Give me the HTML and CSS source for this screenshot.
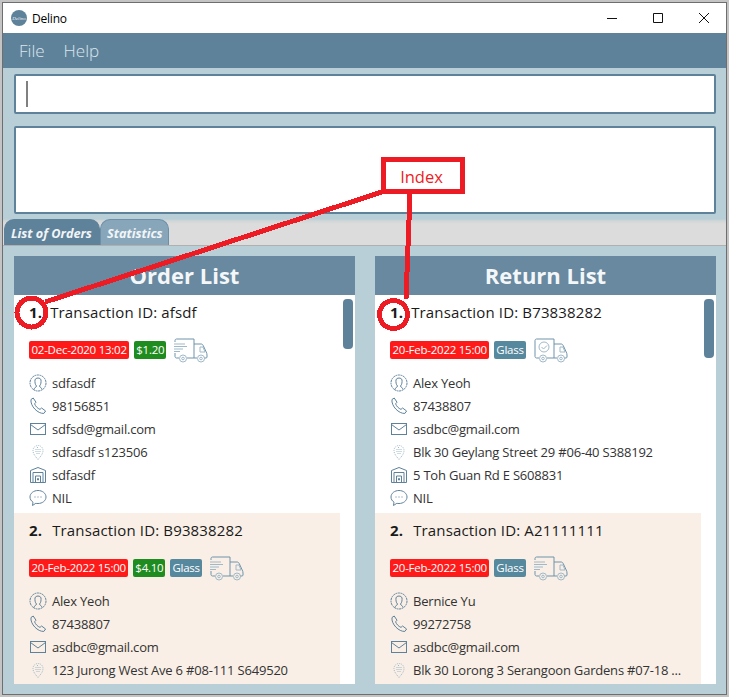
FILE: index.html
```html
<!DOCTYPE html>
<html lang="en">
<head>
    <meta charset="UTF-8">
    <meta name="viewport" content="width=device-width, initial-scale=1.0">
    <title>Delino</title>
    <link rel="stylesheet" href="styles.css">
</head>
<body>
    <!-- icons used by every card -->
    <svg class="icon-defs" aria-hidden="true">
        <symbol id="i-person" viewBox="0 0 18 18">
            <circle cx="9" cy="9" r="8" stroke-dasharray="2 0.6"/>
            <path d="M5 15.500c0-2 2.500-2 2.500-3.500C6 10.500 5.800 8 6 6c.4-2.600 5.600-2.600 6 0 .2 2 0 4.500-1.500 6 0 1.500 2.500 1.500 2.500 3.500"/>
        </symbol>
        <symbol id="i-phone" viewBox="0 0 18 18">
            <path d="M2 2.500 4.200 1 7 5.200 5.600 6.800c.8 2.400 3 4.600 5.400 5.600l1.600-1.400 4 3-1.700 2.400C9 17 1 9 2 2.500z"/>
        </symbol>
        <symbol id="i-mail" viewBox="0 0 18 18">
            <rect x="1.500" y="3.500" width="15" height="11"/>
            <path d="M1.500 4.500 9 10l7.500-5.500"/>
        </symbol>
        <symbol id="i-pin" viewBox="0 0 18 18">
            <path class="faint" d="M9 16.500C6.500 13.500 4 11 4 7.500a5 5 0 0 1 10 0c0 3.500-2.500 6-5 9z" stroke-dasharray="1 1"/>
            <path class="faint" d="M6.500 6.500h5M6.500 8.500h5M7.500 10.500h3M8 4.500h2" stroke-dasharray="1 1"/>
        </symbol>
        <symbol id="i-building" viewBox="0 0 18 18">
            <path d="M1.500 16.500V4.500L9 1.500l7.500 3v12z"/>
            <path d="M4 16.500V6.500h10v10M6.500 16.500V10h5v6.500"/>
            <path d="M8.500 12.500h1v1.500h-1z"/>
        </symbol>
        <symbol id="i-chat" viewBox="0 0 18 18">
            <path d="M9 1.500c4.400 0 8 2.800 8 6.500s-3.600 6.500-8 6.500c-.8 0-1.500 0-2.200-.2L3.500 16.500l.5-3.300C2.200 12 1 10.200 1 8c0-3.700 3.600-6.500 8-6.500z"/>
            <path d="M5.500 8h1M8.500 8h1M11.500 8h1"/>
        </symbol>
        <symbol id="i-truck" viewBox="0 0 35 25">
            <path d="M2 4V2.500C2 1.700 2.700 1 3.500 1H21v19H14M6 20H3.500C2.700 20 2 19.300 2 18.500V15"/>
            <path d="M21 6h7c1 0 1.800.6 2.200 1.500l3 6.500c.5 1 .8 1.800.8 3v2c0 .6-.4 1-1 1h-2M24 20h-3"/>
            <path class="faint" d="M1 6h11M1 8.500h13M1 11h9M1 13.500h6"/>
            <path class="faint" d="M27 9h3l2 5h-5z"/>
            <circle class="faint" cx="10" cy="20.500" r="3.500"/>
            <circle class="faint" cx="10" cy="20.500" r="1.300"/>
            <circle class="faint" cx="28" cy="20.500" r="3.500"/>
            <circle class="faint" cx="28" cy="20.500" r="1.300"/>
        </symbol>
        <symbol id="i-truck-done" viewBox="0 0 35 25">
            <path d="M6 20H3.500C2.700 20 2 19.300 2 18.500V2.500C2 1.700 2.700 1 3.500 1H21v19H14"/>
            <path d="M21 6h7c1 0 1.800.6 2.200 1.500l3 6.500c.5 1 .8 1.800.8 3v2c0 .6-.4 1-1 1h-2M24 20h-3"/>
            <circle class="faint" cx="11" cy="9" r="5"/>
            <path class="faint" d="M8.500 9l2 2 3.500-3.500"/>
            <path class="faint" d="M27 9h3l2 5h-5z"/>
            <circle class="faint" cx="10" cy="20.500" r="3.500"/>
            <circle class="faint" cx="10" cy="20.500" r="1.300"/>
            <circle class="faint" cx="28" cy="20.500" r="3.500"/>
            <circle class="faint" cx="28" cy="20.500" r="1.300"/>
        </symbol>
    </svg>

    <div class="window">
        <div class="titlebar">
            <div class="logo"><span>Delino</span></div>
            <div class="app-name">Delino</div>
            <div class="controls">
                <svg class="control" viewBox="0 0 46 30"><path d="M18 15.500h10"/></svg>
                <svg class="control" viewBox="0 0 46 30"><path d="M18.500 10.500h9v9h-9z"/></svg>
                <svg class="control" viewBox="0 0 46 30"><path d="M18 10l10 10M28 10 18 20"/></svg>
            </div>
        </div>

        <div class="menubar">
            <span class="menu-item">File</span>
            <span class="menu-item">Help</span>
        </div>

        <div class="top-area">
            <div class="command-box"><div class="caret"></div></div>
            <div class="result-box"></div>
        </div>

        <div class="tab-strip">
            <div class="tab tab-active">List of Orders</div>
            <div class="tab tab-stats">Statistics</div>
        </div>

        <div class="lists">
            <section class="panel">
                <h2 class="panel-title">Order List</h2>
                <div class="list">
                    <div class="scroll-thumb thumb-order"></div>
                    <article class="card">
                        <div class="card-title title-first"><b>1.</b><span>Transaction ID: afsdf</span></div>
                        <div class="tags">
                            <span class="tag tag-red">02-Dec-2020 13:02</span>
                            <span class="tag tag-green">$1.20</span>
                            <svg class="truck"><use href="#i-truck"/></svg>
                        </div>
                        <div class="field"><svg class="icon"><use href="#i-person"/></svg>sdfasdf</div>
                        <div class="field"><svg class="icon"><use href="#i-phone"/></svg>98156851</div>
                        <div class="field"><svg class="icon"><use href="#i-mail"/></svg>sdfsd@gmail.com</div>
                        <div class="field"><svg class="icon"><use href="#i-pin"/></svg>sdfasdf s123506</div>
                        <div class="field"><svg class="icon"><use href="#i-building"/></svg>sdfasdf</div>
                        <div class="field"><svg class="icon"><use href="#i-chat"/></svg>NIL</div>
                    </article>
                    <article class="card card-alt">
                        <div class="card-title"><b>2.</b><span>Transaction ID: B93838282</span></div>
                        <div class="tags">
                            <span class="tag tag-red">20-Feb-2022 15:00</span>
                            <span class="tag tag-green">$4.10</span>
                            <span class="tag tag-glass">Glass</span>
                            <svg class="truck"><use href="#i-truck"/></svg>
                        </div>
                        <div class="field"><svg class="icon"><use href="#i-person"/></svg>Alex Yeoh</div>
                        <div class="field"><svg class="icon"><use href="#i-phone"/></svg>87438807</div>
                        <div class="field"><svg class="icon"><use href="#i-mail"/></svg>asdbc@gmail.com</div>
                        <div class="field"><svg class="icon"><use href="#i-pin"/></svg>123 Jurong West Ave 6 #08-111 S649520</div>
                    </article>
                </div>
            </section>

            <section class="panel">
                <h2 class="panel-title">Return List</h2>
                <div class="list">
                    <div class="scroll-thumb thumb-return"></div>
                    <article class="card">
                        <div class="card-title title-first"><b>1.</b><span>Transaction ID: B73838282</span></div>
                        <div class="tags">
                            <span class="tag tag-red">20-Feb-2022 15:00</span>
                            <span class="tag tag-glass">Glass</span>
                            <svg class="truck"><use href="#i-truck-done"/></svg>
                        </div>
                        <div class="field"><svg class="icon"><use href="#i-person"/></svg>Alex Yeoh</div>
                        <div class="field"><svg class="icon"><use href="#i-phone"/></svg>87438807</div>
                        <div class="field"><svg class="icon"><use href="#i-mail"/></svg>asdbc@gmail.com</div>
                        <div class="field"><svg class="icon"><use href="#i-pin"/></svg>Blk 30 Geylang Street 29 #06-40 S388192</div>
                        <div class="field"><svg class="icon"><use href="#i-building"/></svg>5 Toh Guan Rd E S608831</div>
                        <div class="field"><svg class="icon"><use href="#i-chat"/></svg>NIL</div>
                    </article>
                    <article class="card card-alt">
                        <div class="card-title"><b>2.</b><span>Transaction ID: A21111111</span></div>
                        <div class="tags">
                            <span class="tag tag-red">20-Feb-2022 15:00</span>
                            <span class="tag tag-glass">Glass</span>
                            <svg class="truck"><use href="#i-truck"/></svg>
                        </div>
                        <div class="field"><svg class="icon"><use href="#i-person"/></svg>Bernice Yu</div>
                        <div class="field"><svg class="icon"><use href="#i-phone"/></svg>99272758</div>
                        <div class="field"><svg class="icon"><use href="#i-mail"/></svg>asdbc@gmail.com</div>
                        <div class="field"><svg class="icon"><use href="#i-pin"/></svg>Blk 30 Lorong 3 Serangoon Gardens #07-18 ...</div>
                    </article>
                </div>
            </section>
        </div>

        <!-- red annotation drawn on top of the screenshot -->
        <svg class="callout-lines" viewBox="0 0 729 697">
            <path d="M385 191 45 302"/>
            <path d="M410 194 406 299"/>
            <circle cx="31.500" cy="312.500" r="14.500"/>
            <circle cx="393.500" cy="314.500" r="14"/>
        </svg>
        <div class="callout-box">Index</div>
    </div>
</body>
</html>
```

FILE: styles.css
```css
* {
    box-sizing: border-box;
}

body {
    margin: 0;
    padding: 2px;
    font-family: "Open Sans", "Noto Sans", sans-serif;
    background-color: #c4c4c4;
}

.icon-defs {
    position: absolute;
    width: 0;
    height: 0;
}

symbol {
    overflow: visible;
}

.window {
    position: relative;
    display: flex;
    flex-direction: column;
    width: 725px;
    height: 693px;
    border: 1px solid #6e6e6e;
    overflow: hidden;
    background-color: #b9cfd7;
}

/* Title bar */
.titlebar {
    display: flex;
    align-items: center;
    height: 30px;
    padding-left: 8px;
    background-color: white;
}

.logo {
    display: flex;
    justify-content: center;
    align-items: center;
    width: 16px;
    height: 16px;
    border-radius: 50%;
    background-color: #5f829b;
    overflow: hidden;
}

.logo span {
    font-family: "Liberation Serif", serif;
    font-style: italic;
    font-size: 5px;
    color: #e8eef2;
}

.app-name {
    margin-left: 5px;
    font-size: 12px;
    letter-spacing: -0.2px;
    color: black;
}

.controls {
    display: flex;
    margin-left: auto;
    margin-right: -1px;
}

.control {
    width: 46px;
    height: 30px;
    fill: none;
    stroke: #111;
    stroke-width: 1;
}

/* Menu */
.menubar {
    display: flex;
    align-items: center;
    gap: 19px;
    height: 35px;
    padding-left: 16px;
    background-color: #5f829b;
}

.menu-item {
    font-size: 17px;
    font-weight: 300;
    color: #dde6ec;
}

/* Command box and result box */
.top-area {
    display: flex;
    flex-direction: column;
    gap: 12px;
    padding: 6px 10px 0 11px;
}

.command-box,
.result-box {
    background-color: white;
    border: 2px solid #5f829b;
    border-radius: 2px;
}

.command-box {
    height: 40px;
    padding: 5px 0 0 10px;
}

.caret {
    width: 2px;
    height: 26px;
    background-color: #808080;
}

.result-box {
    height: 88px;
}

/* Tabs */
.tab-strip {
    display: flex;
    align-items: flex-end;
    height: 32px;
    padding-left: 1px;
    background: linear-gradient(#b9cfd7 5px, #d2d6d7 7px, #dcdcdc 10px);
    border-bottom: 1px solid #b0b0b0;
}

.tab {
    display: flex;
    align-items: center;
    height: 26px;
    padding-left: 6px;
    font-size: 12.7px;
    font-weight: 700;
    font-style: italic;
    white-space: nowrap;
    color: #f2f5f7;
    background-color: #88a6ba;
    border: 1px solid #6d8fa8;
    border-bottom: none;
    border-radius: 10px 10px 0 0;
}

.tab-active {
    width: 96px;
    background-color: #5f829b;
    border-color: #5f829b;
}

.tab-stats {
    width: 69px;
}

/* Lists */
.lists {
    display: flex;
    flex: 1;
    gap: 20px;
    min-height: 0;
    padding: 10px 10px 10px 11px;
}

.panel {
    display: flex;
    flex-direction: column;
    width: 341px;
}

.panel-title {
    margin: 0;
    height: 39px;
    line-height: 38px;
    font-size: 22px;
    font-weight: 700;
    text-align: center;
    color: #f4f7f9;
    background-color: #68899f;
}

.list {
    position: relative;
    display: flex;
    flex-direction: column;
    flex: 1;
    min-height: 0;
    padding-right: 15px;
    background-color: white;
    overflow: hidden;
}

.scroll-thumb {
    position: absolute;
    top: 4px;
    right: 2px;
    width: 10px;
    border-radius: 4px;
    background-color: #5f829b;
}

.thumb-order {
    height: 50px;
}

.thumb-return {
    height: 59px;
}

.card {
    height: 218px;
    flex: none;
    padding: 6px 0 0 15px;
    background-color: white;
}

.card-alt {
    flex: 1;
    background-color: #f9efe6;
}

.card-title {
    display: flex;
    gap: 10px;
    height: 22px;
    line-height: 22px;
    font-size: 15px;
    letter-spacing: 0.15px;
    color: #1a1a1a;
}

.card-title span {
    font-weight: 500;
}

.title-first {
    gap: 8px;
}

.tags {
    display: flex;
    align-items: center;
    gap: 5px;
    height: 24px;
    margin-top: 15px;
    margin-bottom: 9px;
}

.tag {
    display: block;
    height: 18px;
    line-height: 17px;
    padding: 0 2px;
    font-size: 11.5px;
    letter-spacing: -0.25px;
    color: white;
    border-radius: 2px;
}

.tag-red {
    padding: 0 2.5px;
    background-color: #ff1a1a;
}

.tag-green {
    background-color: #1f8c1f;
}

.tag-glass {
    background-color: #56889e;
}

.truck {
    width: 35px;
    height: 25px;
    margin-left: 2px;
    fill: none;
    stroke: #6f93aa;
    stroke-width: 1;
}

.field {
    display: flex;
    align-items: center;
    gap: 5px;
    height: 23px;
    font-size: 13px;
    letter-spacing: -0.2px;
    color: #333;
    white-space: nowrap;
}

.icon {
    flex: none;
    width: 18px;
    height: 18px;
    fill: none;
    stroke: #5f829b;
    stroke-width: 1;
}

.faint {
    stroke: #a0b9c8;
}

/* Annotation */
.callout-lines {
    position: absolute;
    top: -3px;
    left: -3px;
    width: 729px;
    height: 697px;
    fill: none;
    stroke: #ed1c24;
    stroke-width: 5;
    shape-rendering: crispEdges;
    pointer-events: none;
}

.callout-box {
    position: absolute;
    top: 154px;
    left: 378px;
    display: flex;
    justify-content: center;
    align-items: center;
    width: 84px;
    height: 37px;
    padding: 1px 3px 0 0;
    font-size: 16.500px;
    color: #ed1c24;
    background-color: white;
    border: 5px solid #ed1c24;
}
```
